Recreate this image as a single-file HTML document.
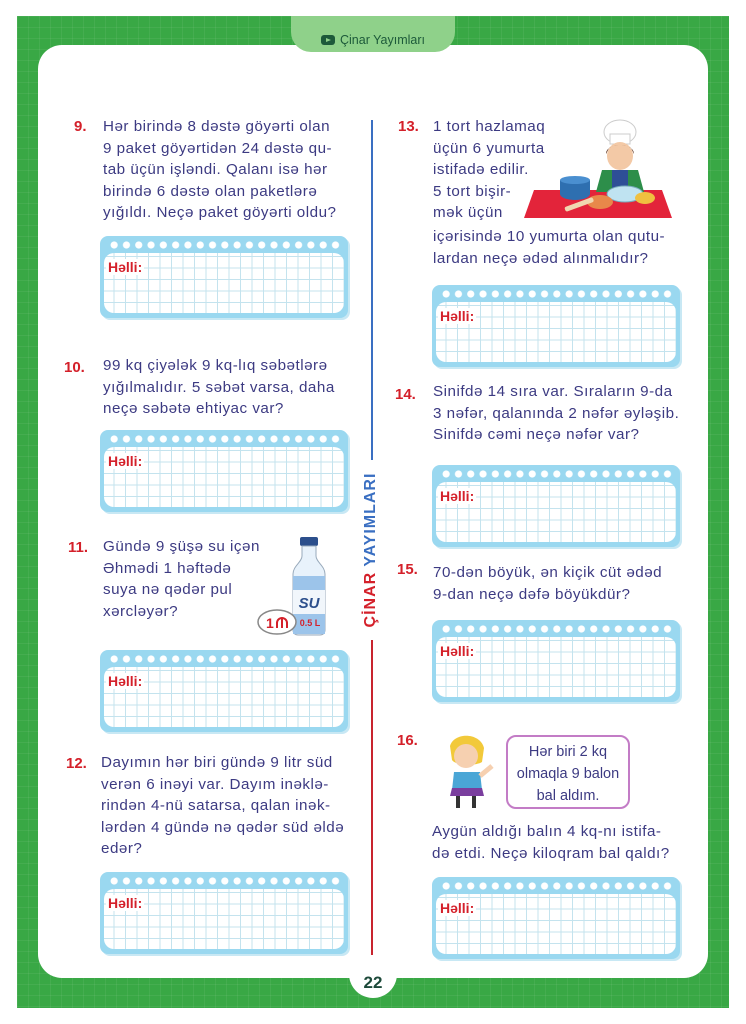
<!DOCTYPE html>
<html><head><meta charset="utf-8"><style>
*{margin:0;padding:0;box-sizing:border-box}
body{width:746px;height:1024px;background:#fff;position:relative;overflow:hidden;font-family:"Liberation Sans","DejaVu Sans",sans-serif}
.green{position:absolute;left:17px;top:16px;width:712px;height:992px;background:#39a845;
background-image:linear-gradient(rgba(255,255,255,.06) 1px,transparent 1px),linear-gradient(90deg,rgba(255,255,255,.06) 1px,transparent 1px);background-size:11px 11px}
.card{position:absolute;left:38px;top:45px;width:670px;height:933px;background:#fff;border-radius:24px}
.tab{position:absolute;left:291px;top:16px;width:164px;height:36px;background:#8fd18a;border-radius:0 0 20px 20px;color:#1d5a3a;font-size:12.5px;text-align:center;line-height:48px}
.tab i{display:inline-block;width:14px;height:10px;background:#1d5a3a;border-radius:3px;vertical-align:-1px;margin-right:5px;position:relative}
.tab i:after{content:"";position:absolute;left:5px;top:2.5px;border-left:5px solid #8fd18a;border-top:2.5px solid transparent;border-bottom:2.5px solid transparent}
.pg{position:absolute;left:349px;top:968px;width:48px;height:30px;background:#fff;border-radius:0 0 24px 24px;text-align:center;font-weight:bold;color:#1d4a3a;font-size:17px;line-height:30px}
.t{position:absolute;color:#3c3a82;font-size:15.2px;letter-spacing:0.5px;line-height:21.6px;white-space:nowrap}
.n{position:absolute;color:#d4202a;font-weight:bold;font-size:15px}
.box{position:absolute;width:248px;height:82px;background:#9ad8f0;border-radius:8px;box-shadow:2px 2px 0 #c8e8f4}
.box .dots{position:absolute;left:8px;top:5px;right:6px;height:8px;background:radial-gradient(circle,#fff 3.3px,transparent 3.8px);background-size:12.3px 8px}
.box .g{position:absolute;left:4px;top:17px;right:4px;bottom:5px;border-radius:10px;background-color:#fff;
background-image:linear-gradient(#c4e3ee 1px,transparent 1px),linear-gradient(90deg,#c4e3ee 1px,transparent 1px);background-size:11.5px 11.5px;background-position:-2px 3px}
.box .h{position:absolute;left:6px;top:23px;color:#d4202a;font-weight:bold;font-size:14px;background:#fff;padding:0 2px}
.vl{position:absolute;left:371px;width:2px}
</style></head><body>
<div class="green"></div>
<div class="card"></div>
<div class="tab"><i></i>Çinar Yayımları</div>
<div class="pg">22</div>

<div class="vl" style="top:120px;height:340px;background:#3a6fc2"></div>
<div class="vl" style="top:640px;height:315px;background:#c8242e"></div>
<div style="position:absolute;left:362px;top:550px;width:20px;height:0;">
<div style="position:absolute;left:-80px;top:-10px;width:180px;height:20px;transform:rotate(-90deg);font-weight:bold;font-size:16px;letter-spacing:1px;text-align:center;white-space:nowrap"><span style="color:#d4202a">ÇİNAR</span> <span style="color:#3a6fc2">YAYIMLARI</span></div></div>

<!-- 9 -->
<div class="n" style="left:74px;top:118px">9.</div>
<div class="t" style="left:103px;top:116px">Hər birində 8 dəstə göyərti olan<br>9 paket göyərtidən 24 dəstə qu-<br>tab üçün işləndi. Qalanı isə hər<br>birində 6 dəstə olan paketlərə<br>yığıldı. Neçə paket göyərti oldu?</div>
<div class="box" style="left:100px;top:236px"><div class="dots"></div><div class="g"></div><div class="h">Həlli:</div></div>

<!-- 10 -->
<div class="n" style="left:64px;top:359px">10.</div>
<div class="t" style="left:103px;top:355px">99 kq çiyələk 9 kq-lıq səbətlərə<br>yığılmalıdır. 5 səbət varsa, daha<br>neçə səbətə ehtiyac var?</div>
<div class="box" style="left:100px;top:430px"><div class="dots"></div><div class="g"></div><div class="h">Həlli:</div></div>

<!-- 11 -->
<div class="n" style="left:68px;top:539px">11.</div>
<div class="t" style="left:103px;top:536px">Gündə 9 şüşə su içən<br>Əhmədi 1 həftədə<br>suya nə qədər pul<br>xərcləyər?</div>
<svg style="position:absolute;left:255px;top:534px" width="80" height="105" viewBox="0 0 80 105">
<rect x="45" y="3" width="18" height="9" rx="2" fill="#2c4f8c"/>
<path d="M47 12h14v10c0 6 9 10 9 18v56c0 3-2 5-5 5H43c-3 0-5-2-5-5V40c0-8 9-12 9-18z" fill="#e8f2fb" stroke="#9ab" stroke-width="1"/>
<rect x="38" y="42" width="32" height="14" fill="#9cc4ea"/>
<rect x="38" y="56" width="32" height="24" fill="#f1f6fb"/>
<text x="54" y="74" font-family="Liberation Sans" font-weight="bold" font-style="italic" font-size="15" fill="#2c4f8c" text-anchor="middle">SU</text>
<rect x="38" y="80" width="32" height="20" fill="#9cc4ea"/>
<text x="55" y="92" font-family="Liberation Sans" font-weight="bold" font-size="9" fill="#d4202a" text-anchor="middle">0.5 L</text>
<ellipse cx="22" cy="88" rx="19" ry="12" fill="#fff" stroke="#888" stroke-width="1.5"/>
<text x="11" y="94" font-family="Liberation Sans" font-weight="bold" font-size="14" fill="#d4202a">1</text>
<path d="M22 94v-5a5 5 0 0 1 10 0v5M27 84v10" stroke="#d4202a" stroke-width="2" fill="none"/>
</svg>
<div class="box" style="left:100px;top:650px"><div class="dots"></div><div class="g"></div><div class="h">Həlli:</div></div>

<!-- 12 -->
<div class="n" style="left:66px;top:755px">12.</div>
<div class="t" style="left:101px;top:752px">Dayımın hər biri gündə 9 litr süd<br>verən 6 inəyi var. Dayım inəklə-<br>rindən 4-nü satarsa, qalan inək-<br>lərdən 4 gündə nə qədər süd əldə<br>edər?</div>
<div class="box" style="left:100px;top:872px"><div class="dots"></div><div class="g"></div><div class="h">Həlli:</div></div>

<!-- 13 -->
<div class="n" style="left:398px;top:118px">13.</div>
<div class="t" style="left:433px;top:116px">1 tort hazlamaq<br>üçün 6 yumurta<br>istifadə edilir.<br>5 tort bişir-<br>mək üçün</div>
<div class="t" style="left:433px;top:226px">içərisində 10 yumurta olan qutu-<br>lardan neçə ədəd alınmalıdır?</div>
<svg style="position:absolute;left:520px;top:118px" width="156" height="102" viewBox="0 0 156 102">
<path d="M14 72h128l10 28H4z" fill="#e3243a"/>
<ellipse cx="100" cy="14" rx="16" ry="12" fill="#fff" stroke="#ccc"/>
<rect x="90" y="16" width="20" height="10" fill="#fff" stroke="#ccc"/>
<ellipse cx="100" cy="38" rx="13" ry="14" fill="#f3c9a6"/>
<path d="M86 36c0-12 28-12 28 0l-3-6c-6-4-16-4-22 0z" fill="#5a2e1a"/>
<path d="M82 52h36l6 22H76z" fill="#2d8e4a"/>
<rect x="92" y="52" width="16" height="20" fill="#2e4f96"/>
<ellipse cx="105" cy="76" rx="18" ry="8" fill="#bfe3f1" stroke="#7ab"/>
<path d="M40 62h30v14a15 6 0 0 1-30 0z" fill="#2e6fb0"/>
<ellipse cx="55" cy="62" rx="15" ry="4" fill="#4a8fd0"/>
<ellipse cx="80" cy="84" rx="13" ry="7" fill="#e8884a"/>
<ellipse cx="125" cy="80" rx="10" ry="6" fill="#f0c040"/>
<rect x="44" y="84" width="30" height="5" rx="2" fill="#f0d7b0" transform="rotate(-20 59 86)"/>
</svg>
<div class="box" style="left:432px;top:285px"><div class="dots"></div><div class="g"></div><div class="h">Həlli:</div></div>

<!-- 14 -->
<div class="n" style="left:395px;top:386px">14.</div>
<div class="t" style="left:433px;top:381px">Sinifdə 14 sıra var. Sıraların 9-da<br>3 nəfər, qalanında 2 nəfər əyləşib.<br>Sinifdə cəmi neçə nəfər var?</div>
<div class="box" style="left:432px;top:465px"><div class="dots"></div><div class="g"></div><div class="h">Həlli:</div></div>

<!-- 15 -->
<div class="n" style="left:397px;top:561px">15.</div>
<div class="t" style="left:433px;top:562px">70-dən böyük, ən kiçik cüt ədəd<br>9-dan neçə dəfə böyükdür?</div>
<div class="box" style="left:432px;top:620px"><div class="dots"></div><div class="g"></div><div class="h">Həlli:</div></div>

<!-- 16 -->
<div class="n" style="left:397px;top:732px">16.</div>
<svg style="position:absolute;left:442px;top:732px" width="60" height="80" viewBox="0 0 60 80">
<path d="M8 14c4-14 30-14 34 2l-2 14c-6 4-26 4-30-2z" fill="#f2c93a"/>
<ellipse cx="24" cy="24" rx="12" ry="12" fill="#f6d0b0"/>
<path d="M12 40h26l2 18H10z" fill="#4aa6d6"/>
<path d="M10 56h30l2 8H8z" fill="#7a3e9e"/>
<path d="M16 64v12M32 64v12" stroke="#333" stroke-width="4"/>
<path d="M38 44l12-10" stroke="#f6d0b0" stroke-width="5"/>
</svg>
<div style="position:absolute;left:506px;top:735px;width:124px;height:74px;border:2px solid #c37cc6;border-radius:10px;background:#fff;color:#3c3a82;font-size:14.5px;line-height:22px;text-align:center;padding-top:4px">Hər biri 2 kq<br>olmaqla 9 balon<br>bal aldım.</div>
<div class="t" style="left:432px;top:821px">Aygün aldığı balın 4 kq-nı istifa-<br>də etdi. Neçə kiloqram bal qaldı?</div>
<div class="box" style="left:432px;top:877px"><div class="dots"></div><div class="g"></div><div class="h">Həlli:</div></div>
</body></html>
